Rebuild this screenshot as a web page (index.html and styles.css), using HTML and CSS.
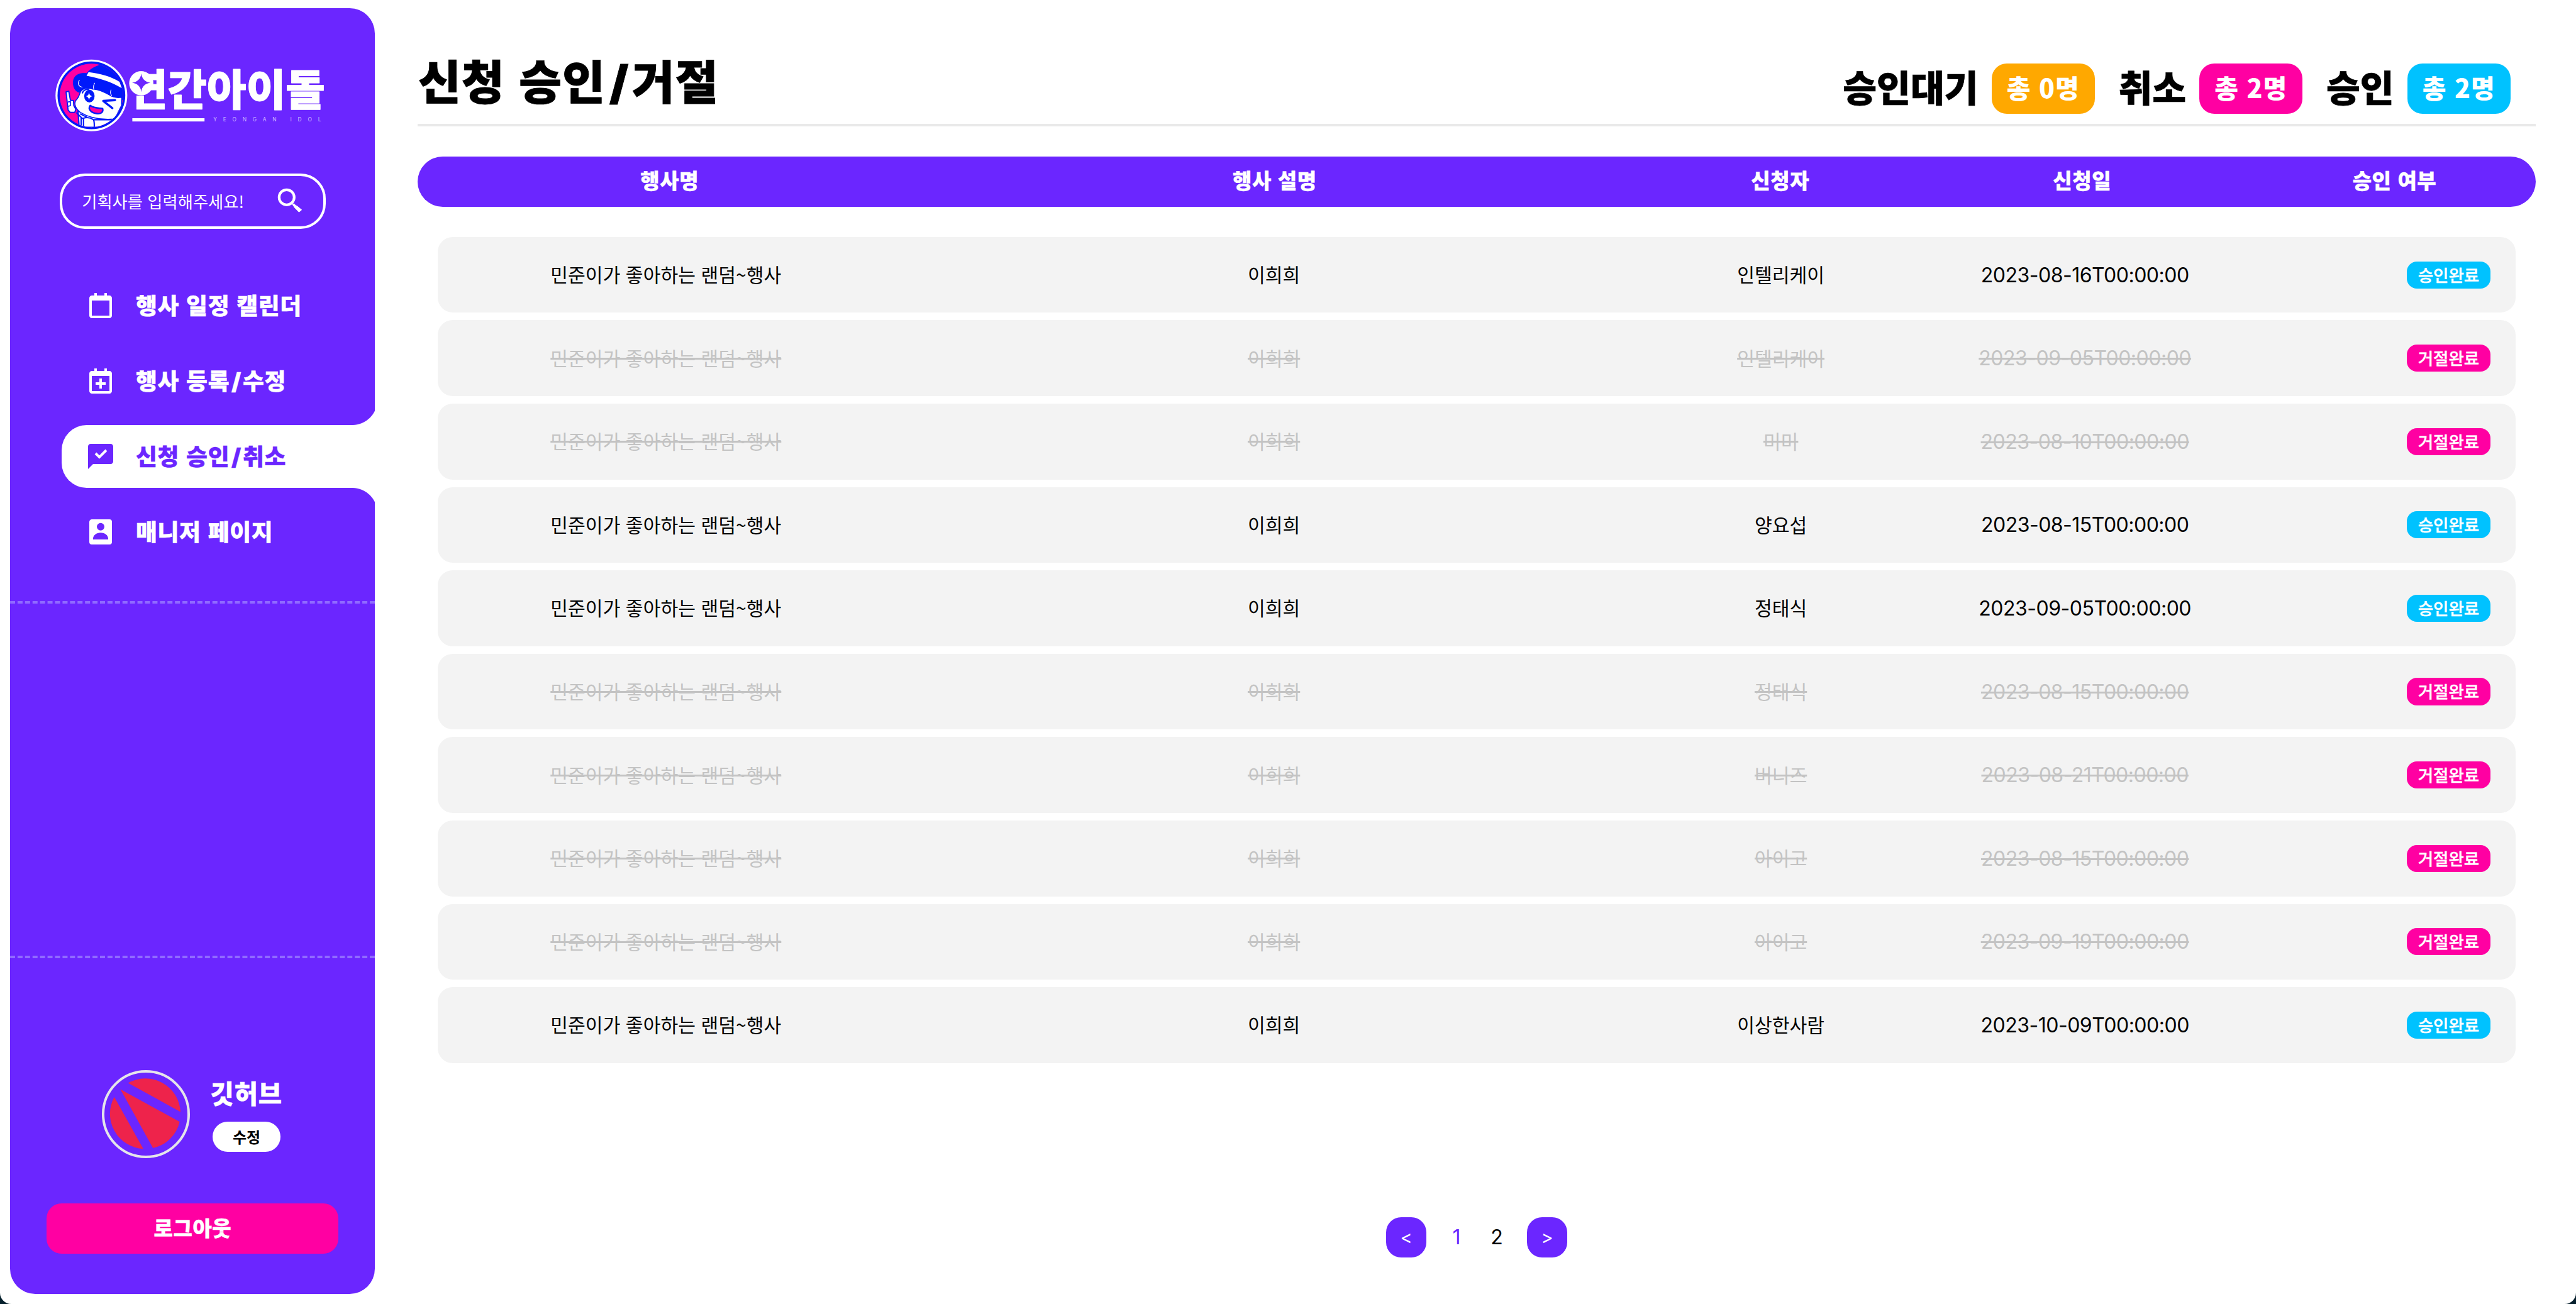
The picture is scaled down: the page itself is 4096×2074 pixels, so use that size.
FILE: index.html
```html
<!DOCTYPE html>
<html lang="ko">
<head>
<meta charset="utf-8">
<title>연간아이돌 - 신청 승인/거절</title>
<link rel="stylesheet" href="styles.css">
</head>
<body>
<div class="window">
  <aside class="sidebar">
    <div class="sidebar-top">
      <svg class="logo" viewBox="110 95 540 190" role="img" aria-label="연간아이돌">
        <defs><clipPath id="face-clip"><circle cx="245" cy="239" r="189"/></clipPath></defs>
        <g transform="translate(100 110) scale(.33333)">
          <circle cx="245" cy="239" r="214" fill="#fff"/>
          <circle cx="245" cy="239" r="202" fill="#0019fa"/>
          <g clip-path="url(#face-clip)" stroke-linejoin="round" stroke-linecap="round">
            <rect x="40" y="40" width="400" height="400" fill="#ff00a2"/>
            <path d="M340 40C290 58 240 72 218 106C185 100 136 112 135 160C134 196 152 220 180 225L445 270V40Z" fill="#0019fa"/>
            <path d="M165 330L172 430H440V370Z" fill="#fff" stroke="#0019fa" stroke-width="8"/>
            <path d="M178 222C188 198 214 188 258 202C286 202 318 216 352 236C376 252 402 254 426 250L424 300L384 380C310 386 236 376 178 340C144 312 138 280 158 262C170 250 172 238 178 222Z" fill="#fff" stroke="#0019fa" stroke-width="6"/>
            <path d="M228 100C300 108 366 128 413 158L426 196C366 158 290 136 216 122Z" fill="#fff"/>
            <path d="M173 148C160 172 170 186 190 190M264 166C254 186 254 198 264 212M362 206C356 222 360 234 366 240" fill="none" stroke="#fff" stroke-width="4"/>
            <path d="M191 224C198 208 212 202 228 204" fill="none" stroke="#0019fa" stroke-width="8"/>
            <ellipse cx="233" cy="243" rx="31" ry="38" fill="#0019fa"/>
            <path d="M231 222Q234 241 250 244Q234 248 231 267Q228 248 212 244Q228 241 231 222Z" fill="#fff"/>
            <path d="M386 267L316 272L370 315" fill="none" stroke="#0019fa" stroke-width="13"/>
            <path d="M238 299C262 316 290 314 312 318C318 340 300 352 274 347C242 343 222 320 238 299Z" fill="#ff00a2" stroke="#0019fa" stroke-width="9"/>
            <path d="M94 218L110 214L120 268L138 270L140 300L152 322L146 340H118L106 326Z" fill="#fff" stroke="#0019fa" stroke-width="7"/>
            <path d="M107 278L120 276V300L108 304" fill="none" stroke="#0019fa" stroke-width="6"/>
            <path d="M158 344L190 376M180 350L216 368M184 374V430M196 376C216 368 240 372 258 384C264 400 262 420 262 436M198 376V436M264 384H380" fill="none" stroke="#0019fa" stroke-width="8"/>
          </g>
        </g>
        <text class="logo-name" x="255" y="210" textLength="391">연간아이돌</text>
        <circle cx="280.8" cy="165.500" r="24" fill="#fff"/>
        <path d="M280.8 146Q282.500 162 299 164.500Q282.500 167 280.800 183Q279 167 262.500 164.500Q279 162 280.800 146Z" fill="#6b26ff"/>
        <rect x="263" y="235" width="143.500" height="6.500" fill="#fff"/>
        <text class="logo-sub" x="424" y="241.500" textLength="214">YEONGAN IDOL</text>
      </svg>
      <div class="search">
        <span class="search-text">기획사를 입력해주세요!</span>
        <svg class="search-icon" viewBox="552 374 50 50"><circle cx="570.500" cy="392.500" r="15" fill="none" stroke="#fff" stroke-width="5.200"/><path d="M581 406L585 404.500Q588 408 592 410L601 417.500L595 422.500L586 413.500Q583 409 581 406Z" fill="#fff"/></svg>
      </div>
      <nav class="nav">
        <a class="nav-item"><svg class="nav-icon" viewBox="0 0 24 24"><path d="M5 22h14c1.103 0 2-.897 2-2V6c0-1.103-.897-2-2-2h-2V2h-2v2H9V2H7v2H5c-1.103 0-2 .897-2 2v14c0 1.103.897 2 2 2zM19 8l.001 12H5V8h14z"/></svg><span class="nav-label">행사 일정 캘린더</span></a>
        <a class="nav-item"><svg class="nav-icon" viewBox="0 0 24 24"><path d="M8 15h3v3h2v-3h3v-2h-3v-3h-2v3H8z"/><path d="M5 22h14c1.103 0 2-.897 2-2V6c0-1.103-.897-2-2-2h-2V2h-2v2H9V2H7v2H5c-1.103 0-2 .897-2 2v14c0 1.103.897 2 2 2zM19 8l.001 12H5V8h14z"/></svg><span class="nav-label">행사 등록<span class="slash">/</span>수정</span></a>
        <a class="nav-item active"><svg class="nav-icon" viewBox="0 0 24 24"><path d="M20 2H4c-1.103 0-2 .897-2 2v18l4-4h14c1.103 0 2-.897 2-2V4c0-1.103-.897-2-2-2zm-9 11.914-3.707-3.707 1.414-1.414L11 11.086l4.793-4.793 1.414 1.414L11 13.914z"/></svg><span class="nav-label">신청 승인<span class="slash">/</span>취소</span></a>
        <a class="nav-item"><svg class="nav-icon" viewBox="0 0 24 24"><path fill-rule="evenodd" d="M5 2h14a2 2 0 0 1 2 2v16a2 2 0 0 1-2 2H5a2 2 0 0 1-2-2V4c0-1.100.9-2 2-2zm7 2.900a3 3 0 1 0 0 6a3 3 0 1 0 0-6zM6 18h12v-.7c0-2.600-2.700-4.650-6-4.650s-6 2.050-6 4.650z"/></svg><span class="nav-label">매니저 페이지</span></a>
      </nav>
    </div>
    <div class="sidebar-mid"></div>
    <div class="sidebar-bottom">
      <div class="profile">
        <svg class="avatar" viewBox="203 2127 175 175">
          <circle cx="290.500" cy="2214.500" r="85" fill="none" stroke="#e5e5ea" stroke-width="5"/>
          <g fill="#ee234b">
            <path d="M255 2152.700A70 70 0 0 1 359.300 2210Z"/>
            <path d="M239.800 2165L357.600 2229.800A70 70 0 0 1 304.600 2282Z"/>
            <path d="M227.600 2180.300L285.300 2283.600A70 70 0 0 1 227.600 2180.300Z"/>
          </g>
        </svg>
        <div class="profile-info">
          <strong class="profile-name">깃허브</strong>
          <span class="edit">수정</span>
        </div>
      </div>
      <div class="logout">로그아웃</div>
    </div>
  </aside>
  <main class="main">
    <header class="page-head">
      <h1 class="title">신청 승인<span class="slash">/</span>거절</h1>
      <div class="stats">
        <div class="stat"><span>승인대기</span><span class="count wait">총 0명</span></div>
        <div class="stat"><span>취소</span><span class="count no">총 2명</span></div>
        <div class="stat"><span>승인</span><span class="count ok">총 2명</span></div>
      </div>
    </header>
    <div class="table-head"><span>행사명</span><span>행사 설명</span><span>신청자</span><span>신청일</span><span class="last">승인 여부</span></div>
    <div class="rows">
      <div class="row"><span><i>민준이가 좋아하는 랜덤~행사</i></span><span><i>이희희</i></span><span><i>인텔리케이</i></span><span class="date"><i>2023-08-16T00:00:00</i></span><b class="badge ok">승인완료</b></div>
      <div class="row off"><span><i>민준이가 좋아하는 랜덤~행사</i></span><span><i>이희희</i></span><span><i>인텔리케이</i></span><span class="date"><i>2023-09-05T00:00:00</i></span><b class="badge no">거절완료</b></div>
      <div class="row off"><span><i>민준이가 좋아하는 랜덤~행사</i></span><span><i>이희희</i></span><span><i>미미</i></span><span class="date"><i>2023-08-10T00:00:00</i></span><b class="badge no">거절완료</b></div>
      <div class="row"><span><i>민준이가 좋아하는 랜덤~행사</i></span><span><i>이희희</i></span><span><i>양요섭</i></span><span class="date"><i>2023-08-15T00:00:00</i></span><b class="badge ok">승인완료</b></div>
      <div class="row"><span><i>민준이가 좋아하는 랜덤~행사</i></span><span><i>이희희</i></span><span><i>정태식</i></span><span class="date"><i>2023-09-05T00:00:00</i></span><b class="badge ok">승인완료</b></div>
      <div class="row off"><span><i>민준이가 좋아하는 랜덤~행사</i></span><span><i>이희희</i></span><span><i>정태식</i></span><span class="date"><i>2023-08-15T00:00:00</i></span><b class="badge no">거절완료</b></div>
      <div class="row off"><span><i>민준이가 좋아하는 랜덤~행사</i></span><span><i>이희희</i></span><span><i>버니즈</i></span><span class="date"><i>2023-08-21T00:00:00</i></span><b class="badge no">거절완료</b></div>
      <div class="row off"><span><i>민준이가 좋아하는 랜덤~행사</i></span><span><i>이희희</i></span><span><i>아이고</i></span><span class="date"><i>2023-08-15T00:00:00</i></span><b class="badge no">거절완료</b></div>
      <div class="row off"><span><i>민준이가 좋아하는 랜덤~행사</i></span><span><i>이희희</i></span><span><i>아이고</i></span><span class="date"><i>2023-09-19T00:00:00</i></span><b class="badge no">거절완료</b></div>
      <div class="row"><span><i>민준이가 좋아하는 랜덤~행사</i></span><span><i>이희희</i></span><span><i>이상한사람</i></span><span class="date"><i>2023-10-09T00:00:00</i></span><b class="badge ok">승인완료</b></div>
    </div>
    <div class="pager"><span class="page arrow">&lt;</span><span class="page current">1</span><span class="page">2</span><span class="page arrow">&gt;</span></div>
  </main>
</div>
</body>
</html>
```
FILE: styles.css
```css
* { box-sizing: border-box; }
body {
  margin: 0;
  background: #06202d;
  font-family: "Noto Sans CJK KR", sans-serif;
  color: #000;
}
i { font-style: normal; }
.window {
  display: flex;
  height: 2074px;
  padding: 12.8px 64px 16.4px 16px;
  background: #fff;
  border-radius: 0 0 18px 18px;
}

/* Heavy display text */
.nav-label,
.profile-name,
.logout,
.title,
.stat,
.table-head {
  font-weight: 900;
  -webkit-text-stroke: 0.012em currentColor;
}
.slash {
  display: inline-block;
  width: 0.565em;
  font-family: Inter, sans-serif;
  letter-spacing: 0;
  text-align: center;
}

/* Sidebar */
.sidebar {
  flex: none;
  display: flex;
  flex-direction: column;
  width: 580px;
  height: 2044.8px;
  background: #6b26ff;
  border-radius: 40px;
  color: #fff;
}
.sidebar-top {
  height: 947.2px;
  padding-top: 63.2px;
  border-bottom: 4px dashed #906bff;
}
.sidebar-mid {
  height: 564px;
  border-bottom: 4px dashed #906bff;
}
.logo {
  display: block;
  width: 432px;
  height: 152px;
  margin-left: 72px;
}
.logo-name {
  font-size: 85px;
  font-weight: 900;
  fill: #fff;
  stroke: #fff;
  stroke-width: 1.2px;
  stroke-linejoin: round;
}
.logo-sub {
  font-family: Inter, sans-serif;
  font-size: 10.5px;
  fill: #cdb8ff;
}
.search {
  display: flex;
  align-items: center;
  justify-content: space-between;
  width: 422.4px;
  height: 88px;
  margin: 48px 0 0 79.2px;
  padding: 0 33px 0 31px;
  border: 4px solid #fff;
  border-radius: 40px;
}
.search-text {
  font-size: 26.3px;
  line-height: 40px;
  font-weight: 400;
}
.search-icon { width: 40px; height: 40px; margin-top: -2px; }
.nav {
  display: flex;
  flex-direction: column;
  gap: 20px;
  margin: 71.8px 0 0 82.4px;
}
.nav-item {
  position: relative;
  display: flex;
  align-items: center;
  gap: 32px;
  height: 100px;
  padding-left: 37.6px;
}
.nav-label {
  padding-bottom: 4px;
  font-size: 36.8px;
  letter-spacing: 0.7px;
  white-space: nowrap;
}
.nav-icon {
  width: 48px;
  height: 48px;
  fill: currentColor;
}
.active {
  background: #fff;
  color: #6b26ff;
  border-radius: 40px 0 0 40px;
}
.active::before,
.active::after {
  content: "";
  position: absolute;
  right: 0;
  width: 36px;
  height: 40px;
}
.active::before {
  top: -40px;
  background: radial-gradient(circle at 0 0, transparent 39.5px, #fff 40.5px);
}
.active::after {
  bottom: -40px;
  background: radial-gradient(circle at 0 100%, transparent 39.5px, #fff 40.5px);
}
.sidebar-bottom { padding: 177.6px 57.6px 0 58.4px; }
.profile {
  display: flex;
  align-items: center;
  gap: 35.2px;
  padding-left: 88px;
}
.avatar { width: 140px; height: 140px; }
.profile-info {
  display: flex;
  flex-direction: column;
  gap: 21px;
  padding-top: 2px;
}
.profile-name {
  margin-left: -3px;
  font-size: 40.5px;
  line-height: 50px;
  letter-spacing: 0.8px;
}
.edit {
  width: 108.8px;
  height: 48px;
  border-radius: 24px;
  background: #fff;
  color: #000;
  font-size: 24px;
  line-height: 47px;
  font-weight: 700;
  text-align: center;
}
.logout {
  height: 80px;
  margin-top: 72px;
  border-radius: 24px;
  background: #ff00a2;
  font-size: 33px;
  line-height: 77px;
  letter-spacing: 0.6px;
  text-align: center;
}

/* Main column */
.main {
  flex: 1;
  min-width: 0;
  margin-left: 68px;
}
.page-head {
  display: flex;
  justify-content: space-between;
  align-items: flex-start;
  height: 188px;
  padding: 88px 40px 0 1px;
  border-bottom: 4px solid #e9e9e9;
}
.title {
  margin: -30px 0 0;
  font-size: 73.6px;
  line-height: 110px;
  letter-spacing: 1.4px;
}
.stats { display: flex; gap: 37.5px; }
.stat {
  display: flex;
  align-items: center;
  height: 80px;
  gap: 21px;
  font-size: 58.5px;
  line-height: 74px;
}
.stat > span:first-child { margin-top: -7px; }
.count {
  width: 164.4px;
  height: 80px;
  border-radius: 24px;
  color: #fff;
  font-size: 41px;
  line-height: 75px;
  letter-spacing: 1px;
  text-align: center;
  -webkit-text-stroke: 0;
}
.wait { background: #ffa800; }
.no { background: #ff00a2; }
.ok { background: #00c2ff; }
.table-head {
  display: grid;
  grid-template-columns: 801.6px 1122.4px 485.6px 474.4px 1fr;
  height: 80px;
  margin-top: 48px;
  border-radius: 40px;
  background: #6b26ff;
  color: #fff;
  font-size: 33px;
  line-height: 75px;
  letter-spacing: 0.6px;
  text-align: center;
}
.table-head .last { padding-left: 35px; }
.rows {
  display: flex;
  flex-direction: column;
  gap: 12px;
  margin: 48px 32px 0;
}
.row {
  display: grid;
  grid-template-columns: 725.6px 1208px 404px 563.2px 1fr;
  align-items: center;
  height: 120.6px;
  border-radius: 24px;
  background: #f3f3f3;
  font-size: 30.2px;
  text-align: center;
}
.row span { padding-bottom: 2px; }
.row .date {
  padding-bottom: 0;
  font-family: Inter, sans-serif;
  font-size: 32px;
  letter-spacing: -0.5px;
}
.off span { color: #c3c3c3; }
.off i { text-decoration: line-through 3.2px; }
.badge {
  justify-self: end;
  width: 133px;
  height: 43.2px;
  margin-right: 40px;
  border-radius: 16px;
  color: #fff;
  font-size: 26.5px;
  line-height: 41px;
  font-weight: 500;
  -webkit-text-stroke: 0.4px #fff;
}
.pager {
  display: flex;
  justify-content: center;
  margin-top: 245.2px;
  font-family: Inter, sans-serif;
  font-size: 32px;
  line-height: 64px;
  text-align: center;
}
.page { width: 64px; height: 64px; }
.current { color: #6b26ff; }
.arrow {
  margin: 0 16px;
  border-radius: 24px;
  background: #6b26ff;
  color: #fff;
  font-size: 29px;
}
```
